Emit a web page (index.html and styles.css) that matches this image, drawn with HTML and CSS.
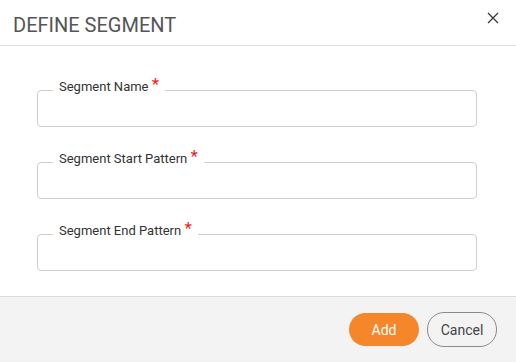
FILE: index.html
```html
<!DOCTYPE html>
<html>
  <head>
    <title>Define Segment</title>
    <meta charset="UTF-8">
    <meta name="viewport" content="width=device-width, initial-scale=1.0">
    <link rel="stylesheet" href="styles.css">
  </head>
  <body>
    <div class="modal">
      <div class="modal-header">
        <h2>DEFINE SEGMENT</h2>
        <button class="close" type="button" aria-label="Close">
          <svg width="12" height="12" viewBox="0 0 12 12">
            <path d="M1 1 L11 11 M11 1 L1 11" stroke="#333" stroke-width="1.2" fill="none"/>
          </svg>
        </button>
      </div>
      <form class="modal-body">
        <fieldset class="field">
          <legend>Segment Name <span class="req">*</span></legend>
          <input type="text" id="name">
        </fieldset>
        <fieldset class="field">
          <legend>Segment Start Pattern <span class="req">*</span></legend>
          <input type="text" id="start">
        </fieldset>
        <fieldset class="field">
          <legend>Segment End Pattern <span class="req">*</span></legend>
          <input type="text" id="end">
        </fieldset>
      </form>
      <div class="modal-footer">
        <button class="btn btn-add" type="button">Add</button>
        <button class="btn btn-cancel" type="button">Cancel</button>
      </div>
    </div>
  </body>
</html>
```

FILE: styles.css
```css
body {
  font-family: Roboto, "Liberation Sans", sans-serif;
  margin: 0;
  padding: 0;
  background: #fff;
}
.modal {
  width: 516px;
  height: 362px;
  display: flex;
  flex-direction: column;
}
.modal-header {
  height: 40px;
  padding: 5px 17px 0 13px;
  border-bottom: 1px solid #dedede;
  display: flex;
  justify-content: space-between;
}
.modal-header h2 {
  margin: 0;
  font-size: 20px;
  font-weight: 400;
  line-height: 40px;
  color: #555;
}
.close {
  border: none;
  background: none;
  padding: 0;
  margin-top: 7px;
  width: 12px;
  height: 12px;
  cursor: pointer;
}
.close svg {
  display: block;
}
.modal-body {
  flex: 1;
  padding: 33px 39px 0 37px;
  display: flex;
  flex-direction: column;
  gap: 24px;
}
.field {
  margin: 0;
  padding: 0 15px;
  border: 1px solid #cfcfcf;
  border-radius: 4px;
  min-width: 0;
}
.field legend {
  padding: 0 6px 6px;
  font-size: 13px;
  line-height: 16px;
  color: #333;
}
.req {
  color: #e41e1e;
  font-size: 17px;
  line-height: 10px;
  vertical-align: 1px;
}
.field input {
  display: block;
  width: 100%;
  height: 25px;
  border: none;
  outline: none;
  padding: 0;
  font: inherit;
  background: transparent;
}
.modal-footer {
  height: 65px;
  border-top: 1px solid #dcdcdc;
  background: #f3f3f3;
  display: flex;
  justify-content: flex-end;
  align-items: center;
  gap: 8px;
  padding: 0 19px;
}
.btn {
  width: 70px;
  border-radius: 17px;
  font-family: Roboto, "Liberation Sans", sans-serif;
  font-size: 14px;
  cursor: pointer;
}
.btn-add {
  height: 33px;
  border: none;
  background: #f5862a;
  color: #fff;
}
.btn-cancel {
  height: 35px;
  border: 1px solid #8a8a8a;
  background: transparent;
  color: #444;
}
```
